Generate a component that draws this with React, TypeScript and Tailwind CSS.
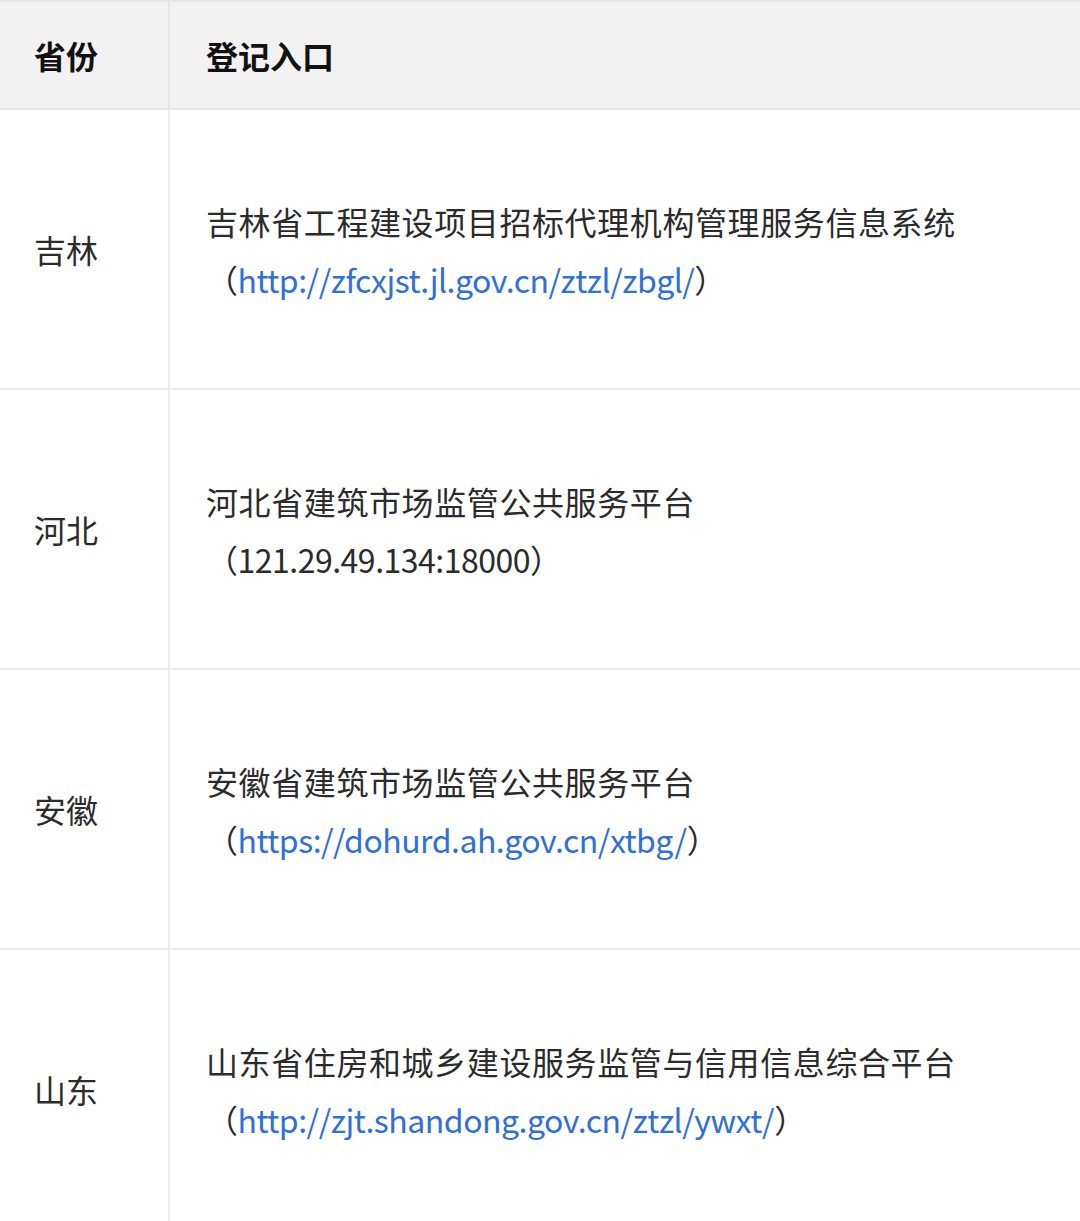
import React from 'react';

interface Row {
    province: string;
    name: string;
    entry: string;
    isLink: boolean;
}

const rows: Row[] = [
    { province: '吉林', name: '吉林省工程建设项目招标代理机构管理服务信息系统', entry: 'http://zfcxjst.jl.gov.cn/ztzl/zbgl/', isLink: true },
    { province: '河北', name: '河北省建筑市场监管公共服务平台', entry: '121.29.49.134:18000', isLink: false },
    { province: '安徽', name: '安徽省建筑市场监管公共服务平台', entry: 'https://dohurd.ah.gov.cn/xtbg/', isLink: true },
    { province: '山东', name: '山东省住房和城乡建设服务监管与信用信息综合平台', entry: 'http://zjt.shandong.gov.cn/ztzl/ywxt/', isLink: true }
];

const font = { fontFamily: '"Microsoft YaHei", "Noto Sans CJK SC", "Noto Sans", sans-serif' };

const App: React.FC = () => {
    return (
        <div className="w-[1080px] h-[1221px] overflow-hidden bg-white text-[#2b2b2b]" style={font}>
            {/* Header */}
            <div className="grid grid-cols-[170px_1fr] h-[110px] bg-[#f2f2f2] border-t-2 border-b-2 border-[#e6e6e6]">
                <div className="flex items-center pl-[34px] border-r-2 border-[#e6e6e6] text-[32px] font-bold text-[#111]">
                    省份
                </div>
                <div className="flex items-center pl-[36px] text-[32px] font-bold text-[#111]">
                    登记入口
                </div>
            </div>

            {/* Rows */}
            {rows.map((row) => (
                <div key={row.province} className="grid grid-cols-[170px_1fr] h-[280px] border-b-2 border-[#ececec]">
                    <div className="flex items-center pl-[34px] border-r-2 border-[#ececec] text-[32px] leading-none">
                        {row.province}
                    </div>
                    <div className="flex flex-col justify-center pl-[36px] pt-[2px] text-[32px] leading-[58px]">
                        <div className="tracking-[0.6px]">{row.name}</div>
                        <div className="tracking-[-0.5px]">
                            （
                            {row.isLink ? (
                                <span className="text-[#2f6fd8]">{row.entry}</span>
                            ) : (
                                <span>{row.entry}</span>
                            )}
                            ）
                        </div>
                    </div>
                </div>
            ))}
        </div>
    );
};

export default App;
